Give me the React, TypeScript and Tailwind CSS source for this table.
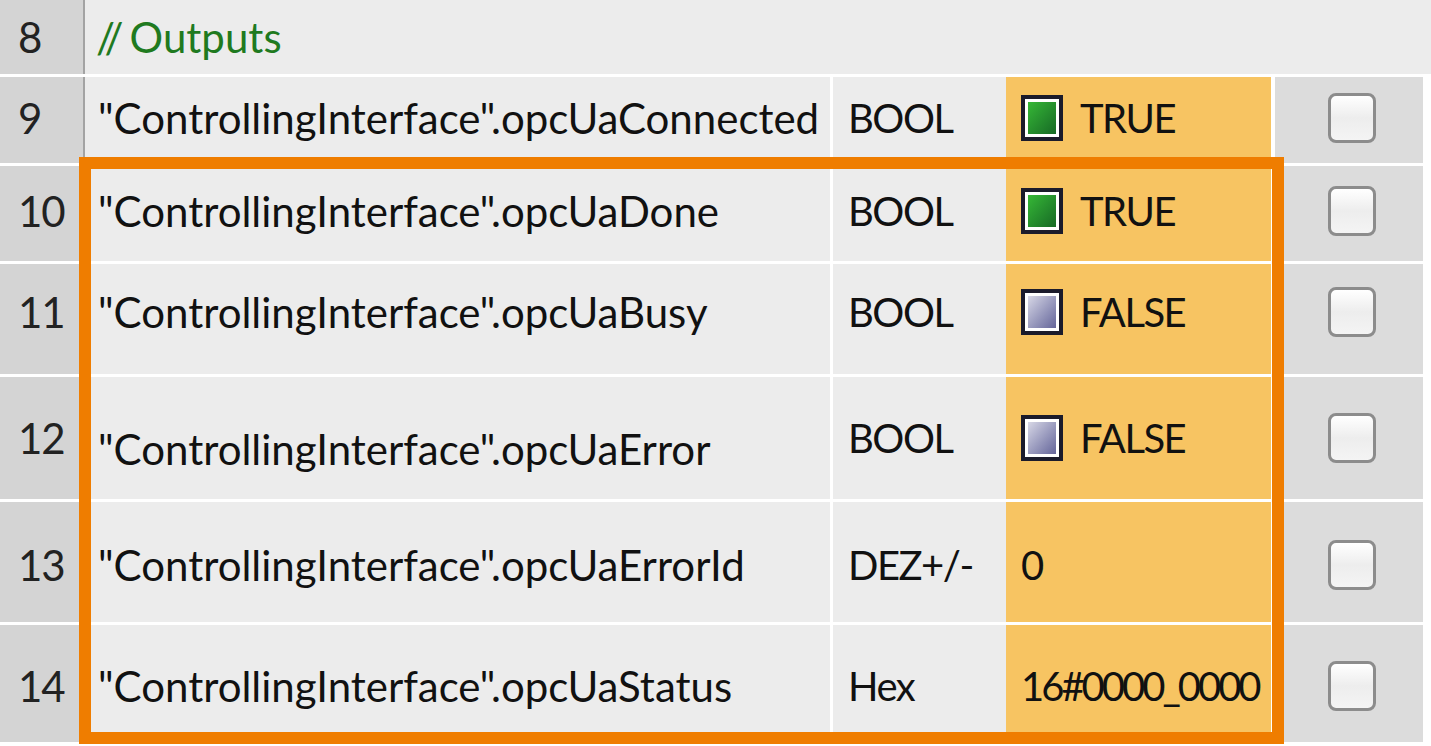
import React from "react";

type Row = {
  no: number;
  name: string;
  type: string;
  value: string;
  bool?: boolean;
  h: string;
  nameCls?: string;
  cellCls?: string;
};

const rows: Row[] = [
  { no: 9, name: '"ControllingInterface".opcUaConnected', type: "BOOL", value: "TRUE", bool: true, h: "h-[86px]", cellCls: "pb-[4px]" },
  { no: 10, name: '"ControllingInterface".opcUaDone', type: "BOOL", value: "TRUE", bool: true, h: "h-[95px]", cellCls: "pb-[6px]" },
  { no: 11, name: '"ControllingInterface".opcUaBusy', type: "BOOL", value: "FALSE", bool: false, h: "h-[110px]", cellCls: "pb-[14px]" },
  { no: 12, name: '"ControllingInterface".opcUaError', type: "BOOL", value: "FALSE", bool: false, h: "h-[122px]", nameCls: "pt-[22px]" },
  { no: 13, name: '"ControllingInterface".opcUaErrorId', type: "DEZ+/-", value: "0", h: "h-[120px]", cellCls: "pt-[6px]" },
  { no: 14, name: '"ControllingInterface".opcUaStatus', type: "Hex", value: "16#0000_0000", h: "h-[117px]", cellCls: "pt-[4px]" },
];

// little status square in front of a BOOL value
const BoolLamp = ({ on }: { on: boolean }) => (
  <span className="flex h-[46px] w-[42px] shrink-0 items-center justify-center border-[4px] border-[#1b1b2b] bg-white p-[3px]">
    <span
      className={
        on
          ? "h-full w-full bg-gradient-to-br from-[#36b836] to-[#176a25]"
          : "h-full w-full bg-gradient-to-br from-[#d8d8e6] to-[#66669a]"
      }
    />
  </span>
);

const CheckBox = () => (
  <span className="ml-[5px] block h-[50px] w-[48px] rounded-[8px] border-[3px] border-[#8c8c8c] bg-gradient-to-b from-white via-[#ededed] to-[#f4f4f4]" />
);

export default function App() {
  return (
    <div
      className="relative h-[746px] w-[1431px] overflow-hidden bg-white text-[42px] leading-none text-[#111]"
      style={{ fontFamily: 'Lato, "Noto Sans", sans-serif' }}
    >
      <div className="flex flex-col gap-[3px]">
        {/* comment row */}
        <div className="flex h-[74px] w-full">
          <div className="flex w-[85px] shrink-0 items-center border-r-2 border-[#a3a3a3] bg-[#d4d4d4] pl-[18px] text-[#222]">8</div>
          <div className="flex grow items-center bg-[#ececec] pl-[11px] text-[#1f7a1f]">
            <span className="tracking-[-1px]">//</span>
            <span className="ml-[7px]">Outputs</span>
          </div>
        </div>

        {rows.map((r) => (
          <div key={r.no} className={`flex ${r.h}`}>
            <div className={`flex w-[85px] items-center border-r-2 border-[#a3a3a3] bg-[#d4d4d4] pl-[18px] tracking-[-1px] text-[#222] ${r.cellCls ?? ""}`}>
              {r.no}
            </div>
            <div className={`mr-[3px] flex w-[745px] items-center bg-[#ececec] pl-[13px] ${r.cellCls ?? ""} ${r.nameCls ?? ""}`}>
              {r.name}
            </div>
            <div className={`flex w-[173px] items-center bg-[#ececec] pl-[15px] text-[40px] tracking-[-1.5px] ${r.cellCls ?? ""}`}>
              {r.type}
            </div>
            <div className={`mr-[4px] flex w-[265px] items-center gap-[17px] overflow-hidden bg-[#f7c462] pl-[15px] text-[40px] ${r.cellCls ?? ""}`}>
              {r.bool !== undefined && <BoolLamp on={r.bool} />}
              <span className={r.value.length > 6 ? "tracking-[-3px]" : "tracking-[-1.5px]"}>{r.value}</span>
            </div>
            <div className={`flex w-[148px] items-center justify-center bg-[#dcdcdc] ${r.cellCls ?? ""}`}>
              <CheckBox />
            </div>
          </div>
        ))}
      </div>

      {/* highlight frame */}
      <div className="absolute left-[79px] top-[157px] h-[587px] w-[1205px] border-[12px] border-[#ef7d00]" />
    </div>
  );
}
